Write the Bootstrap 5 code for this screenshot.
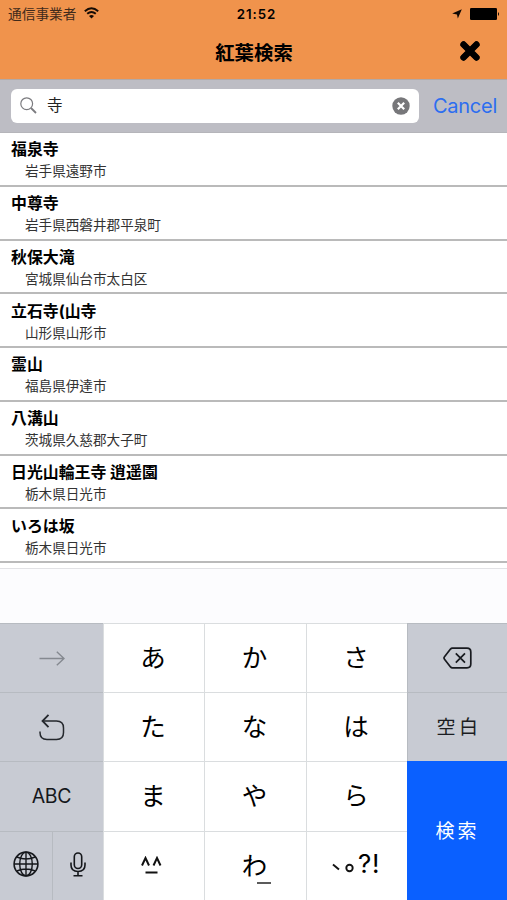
<!DOCTYPE html>
<html lang="ja">
<head>
<meta charset="utf-8">
<meta name="viewport" content="width=device-width, initial-scale=1">
<title>紅葉検索</title>
<link href="https://cdn.jsdelivr.net/npm/bootstrap@5.3.0/dist/css/bootstrap.min.css" rel="stylesheet">
<style>
body{font-family:Inter,"Noto Sans CJK JP",sans-serif;color:#000;height:900px;overflow:hidden;background:#fff}
svg{display:block;flex:none}
.three-col{display:grid;grid-template-columns:1fr auto 1fr;align-items:center}
.top-area{background:#f0934c;height:79px;flex:none}
.status-line{height:27px;padding:0 7px 0 8px;font-size:13.7px;line-height:29px}
.status-icons{padding-bottom:2px}
.carrier{color:#3f2a1b}
.wifi-mark{margin-bottom:3px}
.clock{font-size:13.3px;font-weight:600;letter-spacing:.9px;padding-left:5px}
.title-line{height:52px;padding:0 26px}
.title-line h1{font-size:19.4px;font-weight:700;line-height:50px;padding-left:1px}
.search-strip{height:54px;background:#bdbdc4;border-top:1px solid #b2a9a6;border-bottom:1px solid #b5b5ba;padding:0 10px 1px 11px;flex:none}
.search-box{width:408px;height:34px;border-radius:6px;padding:0 9px}
.query{font-size:15.5px;line-height:30px;margin-left:10px;padding-top:1px;color:#222}
.cancel-link{color:#2c6df0;font-size:20px;letter-spacing:-.25px}
.list-group-flush>.place,.list-group-flush>.place:last-child{height:53.75px;border:0;border-bottom:2px solid #bababa;padding:5.4px 11px 0;background:#fff;color:#000}
.place-name{font-size:15.9px;font-weight:700;line-height:23px}
.place-area{font-size:13.6px;line-height:20px;padding-left:14px;color:#333}
.suggest-bar{height:55px;background:#fcfcfe;border-top:1px solid #e2e2e5;margin-top:5px;flex:none}
.keyboard{display:grid;grid-template-columns:103px 101px 102px 101px 100px;grid-template-rows:69px 69px 70px 69px;height:277px;flex:none}
.key-cell{border:0;border-top:1px solid #dadddf;border-left:1px solid #dadddf;background:#fff;padding:0;display:flex;align-items:center;justify-content:center;font-size:25.5px;line-height:1;color:#000;min-width:0}
.gray-key{background:#c8cbd3;border-color:#b7bbc1}
.edge-key{border-left:0}
.kana{padding-bottom:5px;padding-right:2px;font-family:"Noto Sans CJK JP",sans-serif}
.go-key{grid-column:5;grid-row:3/5;background:#0a60ff;color:#fff;font-size:19px;letter-spacing:3px;border-color:#0a60ff;font-family:"Noto Sans CJK JP",sans-serif;padding-bottom:3px}
.space-key{font-size:19px;letter-spacing:3.5px;color:#1b1d22;padding-left:3px}
.abc-key{font-size:19.5px;letter-spacing:-.3px;color:#15171b;padding-top:1px}
.wa-mark{left:52px;top:50px}
.ask-mark{font-family:Inter,sans-serif;font-size:26px;font-weight:400;margin-left:4px;padding-top:1px;letter-spacing:.5px}
</style>
<script src="https://cdn.jsdelivr.net/npm/bootstrap@5.3.0/dist/js/bootstrap.bundle.min.js"></script>
</head>
<body class="d-flex flex-column">
<header class="top-area">
  <div class="status-line three-col">
    <div class="d-flex align-items-center gap-2"><span class="carrier">通信事業者</span>
      <svg class="wifi-mark" width="15" height="12" viewBox="0 0 15 12" fill="none" stroke="#160c05" stroke-width="1.9"><path d="M.8 4.2Q7.5-1.9 14.2 4.2M3.2 6.8q4.3-3.7 8.6 0"/><path d="M7.5 11.5 5 9q2.5-2 5 0z" fill="#160c05" stroke="none"/></svg>
    </div>
    <div class="clock">21:52</div>
    <div class="status-icons d-flex align-items-center justify-content-end">
      <svg class="me-2" width="10" height="10" viewBox="0 0 11 11"><path d="M10.8.2 6.400 10.500 5.500 6 .2 5z" fill="#100803"/></svg>
      <svg width="30" height="12" viewBox="0 0 30 12"><rect width="27" height="12" rx="1.3"/><path d="M28 4q2 2 0 4z"/></svg>
    </div>
  </div>
  <div class="title-line three-col">
    <span></span><h1 class="m-0">紅葉検索</h1>
    <svg class="ms-auto mb-1" width="22" height="22" viewBox="0 0 22 22"><path d="M5.200 5.200 16.800 16.800M16.800 5.200 5.200 16.800" stroke="#000" stroke-width="5.400" stroke-linecap="square"/><path d="M4.500 4.500 17.500 17.500M17.500 4.500 4.500 17.500" stroke="#000" stroke-width="6.400" stroke-linecap="round"/></svg>
  </div>
</header>
<div class="search-strip d-flex align-items-center justify-content-between">
  <div class="search-box bg-white d-flex align-items-center">
    <svg width="17" height="17" viewBox="0 0 17 17" fill="none" stroke="#7b7b7f" stroke-width="1.2"><circle cx="6.7" cy="6.7" r="5.9"/><path d="m11 11 5 5" stroke-width="1.8"/></svg>
    <span class="query">寺</span>
    <svg class="ms-auto" width="18" height="18" viewBox="0 0 18 18"><circle cx="9" cy="9" r="8.7" fill="#77777a"/><path d="m5.8 5.8 6.4 6.4m0-6.4-6.4 6.4" stroke="#fff" stroke-width="2.2"/></svg>
  </div>
  <span class="cancel-link">Cancel</span>
</div>
<main class="list-group list-group-flush flex-shrink-0">
  <div class="list-group-item place"><div class="place-name">福泉寺</div><div class="place-area">岩手県遠野市</div></div>
  <div class="list-group-item place"><div class="place-name">中尊寺</div><div class="place-area">岩手県西磐井郡平泉町</div></div>
  <div class="list-group-item place"><div class="place-name">秋保大滝</div><div class="place-area">宮城県仙台市太白区</div></div>
  <div class="list-group-item place"><div class="place-name">立石寺(山寺</div><div class="place-area">山形県山形市</div></div>
  <div class="list-group-item place"><div class="place-name">霊山</div><div class="place-area">福島県伊達市</div></div>
  <div class="list-group-item place"><div class="place-name">八溝山</div><div class="place-area">茨城県久慈郡大子町</div></div>
  <div class="list-group-item place"><div class="place-name">日光山輪王寺 逍遥園</div><div class="place-area">栃木県日光市</div></div>
  <div class="list-group-item place"><div class="place-name">いろは坂</div><div class="place-area">栃木県日光市</div></div>
</main>
<div class="suggest-bar"></div>
<section class="keyboard">
  <div class="key-cell gray-key edge-key"><svg width="26" height="15" viewBox="0 0 26 15" fill="none" stroke="#858990" stroke-width="1.4"><path d="M.5 7.5H25M17.8.8 25 7.5l-7.2 6.7"/></svg></div>
  <div class="key-cell kana">あ</div><div class="key-cell kana">か</div><div class="key-cell kana">さ</div>
  <div class="key-cell gray-key"><svg width="29" height="22" viewBox="0 0 29 22" fill="none" stroke="#181a1f" stroke-width="1.7" stroke-linejoin="round"><path d="M9.3 1.2H24q3.8 0 3.8 3.8v12q0 3.8-3.8 3.8H9.3q-1 0-1.8-.9L1.500 12.200q-1-1.200 0-2.400l6-7.700q.8-.9 1.800-.9z"/><path d="m12.800 6.300 9.200 9.400m0-9.400-9.200 9.400"/></svg></div>

  <div class="key-cell gray-key edge-key"><svg width="26" height="27" viewBox="0 0 26 27" fill="none" stroke="#25282d" stroke-width="1.5"><path d="M1 17.500v1q0 7 7 7h9.500q7 0 7-7V14q0-7-7-7H4"/><path d="M9.500.8 3.500 7l6 6.200" stroke-width="1.8"/></svg></div>
  <div class="key-cell kana">た</div><div class="key-cell kana">な</div><div class="key-cell kana">は</div>
  <div class="key-cell gray-key space-key">空白</div>

  <div class="key-cell gray-key edge-key abc-key">ABC</div>
  <div class="key-cell kana">ま</div><div class="key-cell kana">や</div><div class="key-cell kana">ら</div>
  <div class="key-cell go-key">検索</div>

  <div class="d-flex">
    <div class="key-cell gray-key edge-key w-50"><svg class="mb-1" width="26" height="26" viewBox="0 0 26 26" fill="none" stroke="#15171b" stroke-width="1.4"><circle cx="13" cy="13" r="11.900" stroke-width="1.600"/><ellipse cx="13" cy="13" rx="6.300" ry="11.900"/><path d="M13 1v24M1 13h24M3.800 6q9.200 4 18.400 0M3.800 20q9.200-4 18.400 0"/></svg></div>
    <div class="key-cell gray-key w-50"><svg class="mb-1" width="16" height="25" viewBox="0 0 16 25" fill="none" stroke="#15171b" stroke-width="1.600"><rect x="4.300" y="1" width="7.400" height="15.500" rx="3.700"/><path d="M1 10.500V13q0 6.500 7 6.500t7-6.500v-2.500M8 19.500v4M3.500 23.700h9"/></svg></div>
  </div>
  <div class="key-cell"><svg class="me-1" width="24" height="20" viewBox="0 0 24 20" fill="none" stroke="#111" stroke-width="2"><path d="M2 9.500 5.500 2 9 9.500M13.500 9.500 17 2l3.500 7.500M5.500 16.500h12"/></svg></div>
  <div class="key-cell kana position-relative">わ<svg class="position-absolute wa-mark" width="14" height="2"><path d="M0 1h14" stroke="#333" stroke-width="1.600"/></svg></div>
  <div class="key-cell kana"><svg width="22" height="18" viewBox="0 0 22 18" fill="none" stroke="#111" stroke-width="1.900"><path d="m1 9.500 6 5"/><circle cx="17.500" cy="13" r="3.200"/></svg><span class="ask-mark">?!</span></div>
</section>
</body>
</html>
